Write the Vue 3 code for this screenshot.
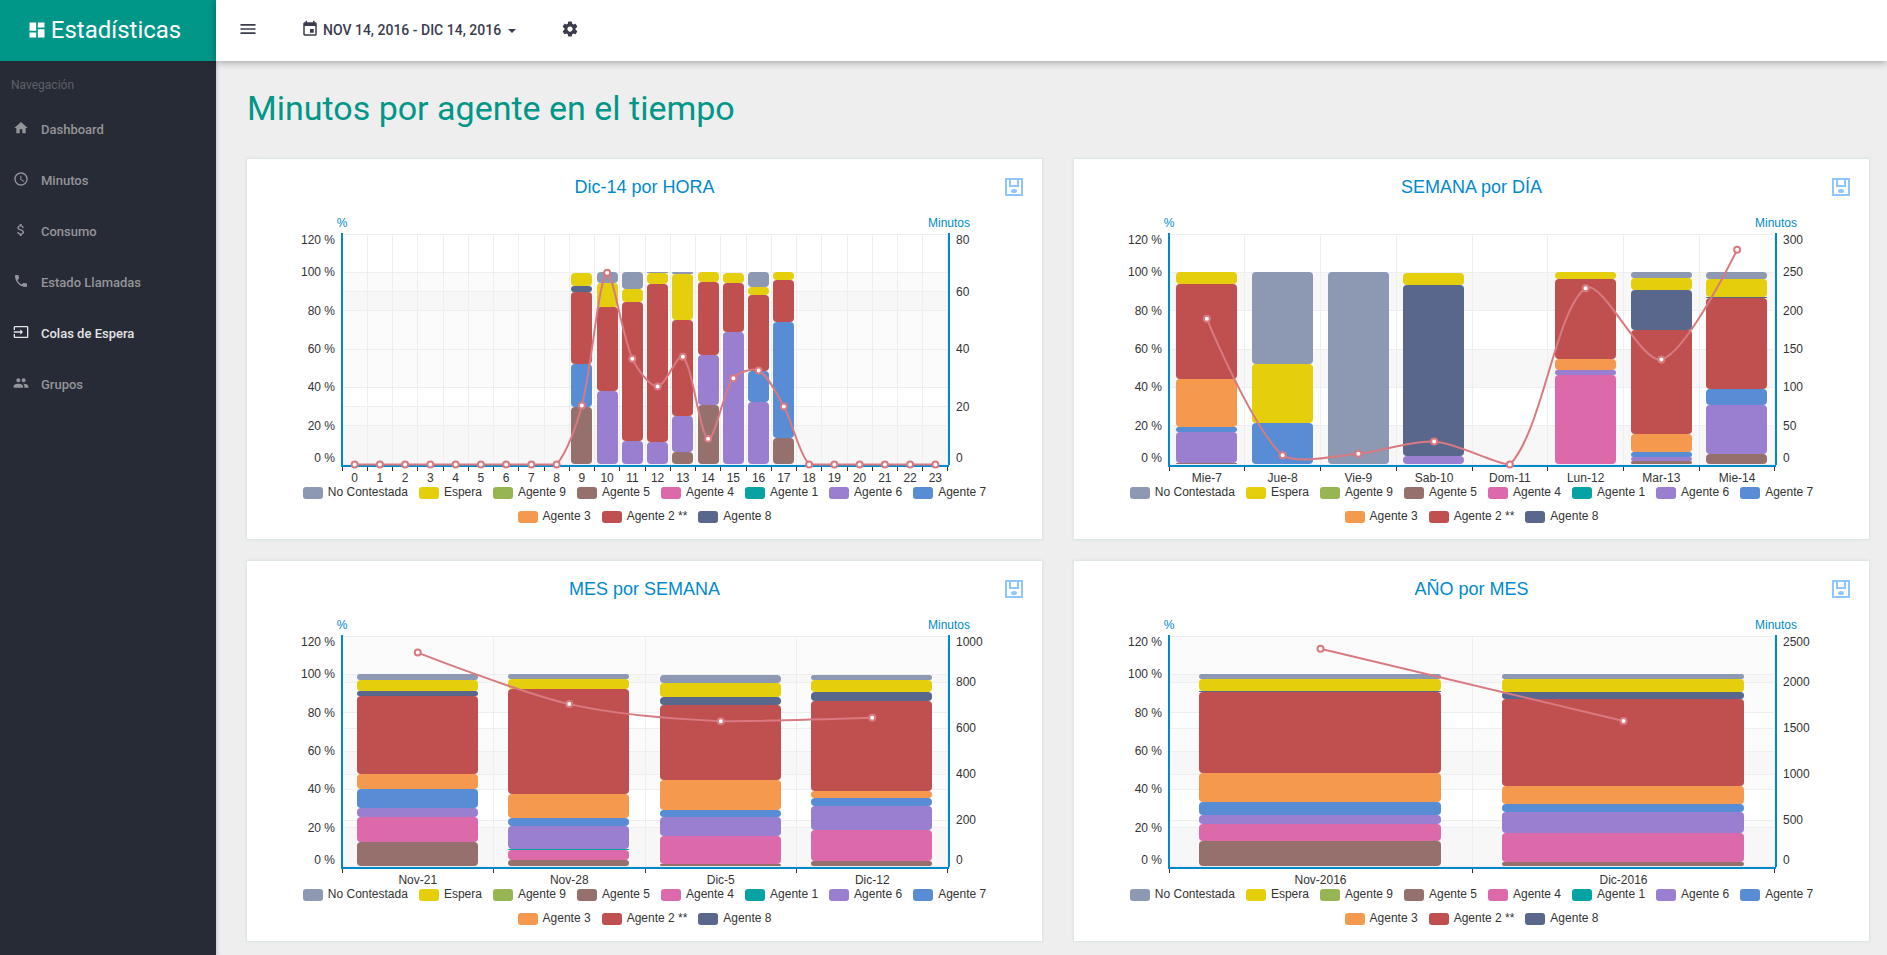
<script setup>
import { ref, computed, onMounted, onBeforeUnmount } from 'vue'

const nav = [
  { label: 'Dashboard', icon: 'M10 20v-6h4v6h5v-8h3L12 3 2 12h3v8z' },
  { label: 'Minutos', icon: 'M11.99 2C6.47 2 2 6.48 2 12s4.47 10 9.99 10C17.52 22 22 17.52 22 12S17.52 2 11.99 2zM12 20c-4.42 0-8-3.58-8-8s3.58-8 8-8 8 3.58 8 8-3.58 8-8 8zm.5-13H11v6l5.25 3.15.75-1.23-4.5-2.67z' },
  { label: 'Consumo', icon: 'M11.8 10.9c-2.27-.59-3-1.2-3-2.15 0-1.09 1.01-1.85 2.7-1.85 1.78 0 2.44.85 2.5 2.1h2.21c-.07-1.72-1.12-3.3-3.21-3.81V3h-3v2.16c-1.94.42-3.5 1.68-3.5 3.61 0 2.31 1.91 3.46 4.7 4.13 2.5.6 3 1.48 3 2.41 0 .69-.49 1.79-2.7 1.79-2.06 0-2.87-.92-2.98-2.1h-2.2c.12 2.19 1.76 3.42 3.68 3.83V21h3v-2.15c1.95-.37 3.5-1.5 3.5-3.55 0-2.84-2.43-3.81-4.7-4.4z' },
  { label: 'Estado Llamadas', icon: 'M6.62 10.79c1.44 2.83 3.76 5.14 6.59 6.59l2.2-2.2c.27-.27.67-.36 1.02-.24 1.12.37 2.33.57 3.57.57.55 0 1 .45 1 1V20c0 .55-.45 1-1 1-9.39 0-17-7.61-17-17 0-.55.45-1 1-1h3.5c.55 0 1 .45 1 1 0 1.25.2 2.45.57 3.57.11.35.03.74-.25 1.02l-2.2 2.2z' },
  { label: 'Colas de Espera', active: true, icon: 'M21 3.01H3c-1.1 0-2 .9-2 2V9h2V4.99h18v14.03H3V15H1v4.01c0 1.1.9 1.98 2 1.98h18c1.1 0 2-.88 2-1.98v-14c0-1.11-.9-2-2-2zM11 16l4-4-4-4v3H1v2h10v3z' },
  { label: 'Grupos', icon: 'M16 11c1.66 0 2.99-1.34 2.99-3S17.66 5 16 5c-1.66 0-3 1.34-3 3s1.34 3 3 3zm-8 0c1.66 0 2.99-1.34 2.99-3S9.66 5 8 5C6.34 5 5 6.34 5 8s1.34 3 3 3zm0 2c-2.33 0-7 1.17-7 3.5V19h14v-2.5c0-2.33-4.67-3.5-7-3.5zm8 0c-.29 0-.62.02-.97.05 1.16.84 1.97 1.97 1.97 3.45V19h6v-2.5c0-2.33-4.67-3.5-7-3.5z' },
]

const series = [
  { key: 'nc', name: 'No Contestada', color: '#8d98b3' },
  { key: 'es', name: 'Espera', color: '#e5cf0d' },
  { key: 'a9', name: 'Agente 9', color: '#97b552' },
  { key: 'a5', name: 'Agente 5', color: '#95706d' },
  { key: 'a4', name: 'Agente 4', color: '#dc69aa' },
  { key: 'a1', name: 'Agente 1', color: '#07a2a4' },
  { key: 'a6', name: 'Agente 6', color: '#9a7fd1' },
  { key: 'a7', name: 'Agente 7', color: '#588dd5' },
  { key: 'a3', name: 'Agente 3', color: '#f5994e' },
  { key: 'a2', name: 'Agente 2 **', color: '#c05050' },
  { key: 'a8', name: 'Agente 8', color: '#59678c' },
]
const stackOrder = ['a9', 'a5', 'a4', 'a1', 'a6', 'a7', 'a3', 'a2', 'a8', 'es', 'nc']
const colorOf = Object.fromEntries(series.map((s) => [s.key, s.color]))

// Every entry: category, minutes, share in percent per series
const hours = {
  9: [20.5, { a5: 29.6, a7: 22.8, a2: 37.2, a8: 3.2, es: 6.7 }],
  10: [66.7, { a6: 37.9, a2: 43.9, es: 12.5, nc: 5.7 }],
  11: [36.8, { a6: 11.8, a2: 72.7, es: 6.7, nc: 8.8 }],
  12: [27.1, { a6: 11.4, a2: 82.5, es: 5.6, nc: 0.5 }],
  13: [37.5, { a5: 6.2, a6: 19.1, a2: 50, es: 23.7, nc: 1 }],
  14: [9, { a5: 30.6, a6: 26.3, a2: 38.2, es: 4.9 }],
  15: [30, { a6: 68.9, a2: 25.6, es: 5 }],
  16: [32.7, { a6: 32.2, a7: 16.1, a2: 39.8, es: 4.1, nc: 7.8 }],
  17: [20.2, { a5: 13.5, a7: 60.5, a2: 21.8, es: 4.2 }],
}

const source = [
  {
    title: 'Dic-14 por HORA', max: 80, step: 20,
    rows: Array.from({ length: 24 }, (_, h) => [String(h), ...(hours[h] || [0, {}])]),
  },
  {
    title: 'SEMANA por DÍA', max: 300, step: 50,
    rows: [
      ['Mie-7', 190, { a5: 0.4, a6: 16.5, a7: 2.2, a3: 25.3, a2: 49.4, es: 6.2 }],
      ['Jue-8', 12, { a7: 21.5, es: 30.9, nc: 47.6 }],
      ['Vie-9', 14, { nc: 100 }],
      ['Sab-10', 30, { a6: 4, a8: 89.4, es: 6.1 }],
      ['Dom-11', 0, {}],
      ['Lun-12', 230, { a4: 46.3, a6: 2.9, a3: 5.5, a2: 41.6, es: 3.7 }],
      ['Mar-13', 137, { a5: 1.5, a6: 2.1, a7: 2.6, a3: 9.7, a2: 54.1, a8: 21, es: 6, nc: 3 }],
      ['Mie-14', 280, { a5: 5, a6: 26, a7: 8.2, a2: 47.5, a8: 0.5, es: 9.3, nc: 3.5 }],
    ],
  },
  {
    title: 'MES por SEMANA', max: 1000, step: 200,
    rows: [
      ['Nov-21', 930, { a5: 12.7, a4: 13, a6: 4.7, a7: 9.9, a3: 7.8, a2: 40.5, a8: 2.6, es: 5.7, nc: 3.1 }],
      ['Nov-28', 706, { a5: 2.9, a4: 5.5, a1: 0.5, a6: 12, a7: 4.2, a3: 12.5, a2: 54.6, es: 5.2, nc: 2.6 }],
      ['Dic-5', 632, { a5: 1.2, a4: 14.2, a6: 10.4, a7: 3.5, a3: 15.6, a2: 39, a8: 4.2, es: 7.3, nc: 4.2 }],
      ['Dic-12', 647, { a5: 2.4, a4: 16.5, a6: 12.5, a7: 4.2, a3: 3.6, a2: 47.1, a8: 4.3, es: 6.2, nc: 2.7 }],
    ],
  },
  {
    title: 'AÑO por MES', max: 2500, step: 500,
    rows: [
      ['Nov-2016', 2366, { a5: 13.3, a4: 8.7, a6: 4.7, a7: 6.8, a3: 15.1, a2: 42.1, a8: 0.8, es: 6, nc: 2.5 }],
      ['Dic-2016', 1581, { a5: 2.1, a4: 15.3, a6: 10.9, a7: 3.8, a3: 9.7, a2: 45.3, a8: 3.6, es: 6.8, nc: 2.5 }],
    ],
  },
]

const plotWidth = ref(765)
const grid = ref(null)
let observer
const measure = () => {
  const el = grid.value && grid.value.querySelector('.plot')
  if (el) plotWidth.value = Math.round(el.getBoundingClientRect().width)
}
onMounted(() => {
  measure()
  observer = new ResizeObserver(measure)
  observer.observe(grid.value)
})
onBeforeUnmount(() => observer && observer.disconnect())

const TOP = 19
const BOTTOM = 249
const LEFT = 80
const SMOOTH = 0.3
const crisp = (v) => Math.floor(v) + 0.5

function smooth(points) {
  const ys = points.map((p) => p[1])
  const lo = Math.min(...ys)
  const hi = Math.max(...ys)
  const clamp = (v) => Math.min(hi, Math.max(lo, v))
  const dist = (a, b) => Math.hypot(a[0] - b[0], a[1] - b[1])
  const handles = points.map((p, i) => {
    const prev = points[i - 1]
    const next = points[i + 1]
    if (!prev || !next) return [p, p]
    const d0 = dist(p, prev)
    const d1 = dist(p, next)
    const v = [(next[0] - prev[0]) * SMOOTH, (next[1] - prev[1]) * SMOOTH]
    const at = (k) => [p[0] + v[0] * k, clamp(p[1] + v[1] * k)]
    return [at(-d0 / (d0 + d1)), at(d1 / (d0 + d1))]
  })
  return points.reduce((d, p, i) => {
    if (i === 0) return `M${p}`
    return `${d}C${handles[i - 1][1]} ${handles[i][0]} ${p}`
  }, '')
}

function axis(max, step, unit) {
  const ticks = []
  for (let v = 0; v <= max; v += step) {
    const y = BOTTOM - (v / max) * (BOTTOM - TOP)
    let base = Math.round(y) + 4
    if (v === 0) base = BOTTOM - 2
    if (v === max) base = TOP + 10
    ticks.push({ v, y, line: crisp(y), base, text: v + unit })
  }
  const bands = ticks.slice(0, -1).filter((_, i) => i % 2 === 0)
    .map((t) => ({ y: t.y - (step / max) * (BOTTOM - TOP), h: (step / max) * (BOTTOM - TOP) }))
  return { ticks, bands }
}

const charts = computed(() => source.map((c) => {
  const right = plotWidth.value - 79
  const pitch = (right - LEFT) / c.rows.length
  const scale = (BOTTOM - TOP) / 120
  const barWidth = pitch < 30 ? Math.ceil(pitch * 0.8) : Math.round(pitch * 0.8)
  const rects = []
  const points = []
  c.rows.forEach(([, minutes, shares], i) => {
    const cx = LEFT + pitch * (i + 0.5)
    points.push([cx, BOTTOM + 0.5 - (minutes / c.max) * (BOTTOM - TOP)])
    const x0 = Math.floor(cx - pitch * 0.4)
    let sum = 0
    stackOrder.forEach((key) => {
      if (!shares[key]) return
      const y1 = Math.round(BOTTOM - sum * scale)
      sum += shares[key]
      const y0 = Math.round(BOTTOM - sum * scale)
      const h = Math.max(1, y1 - y0)
      rects.push({ x: x0, y: y0, w: barWidth, h, r: Math.min(4, h / 2), fill: colorOf[key] })
    })
  })
  return {
    title: c.title,
    right,
    rects,
    points,
    path: smooth(points),
    left: axis(120, 20, ' %'),
    minutes: axis(c.max, c.step, ''),
    labels: c.rows.map((r, i) => ({ text: r[0], x: LEFT + pitch * (i + 0.5) })),
    ticks: Array.from({ length: c.rows.length + 1 }, (_, i) => Math.min(crisp(LEFT + pitch * i), right - 0.5)),
  }
}))
</script>

<template>
  <div class="layout">
    <aside class="sidebar">
      <a class="brand" href="#">
        <svg viewBox="0 0 24 24" aria-hidden="true"><path d="M3 13h8V3H3v10zm0 8h8v-6H3v6zm10 0h8V11h-8v10zm0-18v6h8V3h-8z" /></svg>
        <span>Estadísticas</span>
      </a>
      <nav>
        <p class="nav-title">Navegación</p>
        <a v-for="item in nav" :key="item.label" href="#" class="nav-link" :class="{ active: item.active }">
          <svg viewBox="0 0 24 24" aria-hidden="true"><path :d="item.icon" /></svg>
          <span>{{ item.label }}</span>
        </a>
      </nav>
    </aside>

    <div class="content">
      <header class="topbar">
        <button type="button" class="menu" aria-label="Menú">
          <svg viewBox="0 0 24 24"><path d="M3 18h18v-2H3v2zm0-5h18v-2H3v2zm0-7v2h18V6H3z" /></svg>
        </button>
        <button type="button" class="range">
          <svg viewBox="0 0 24 24" aria-hidden="true"><path d="M17 12h-5v5h5v-5zM16 1v2H8V1H6v2H5c-1.11 0-1.99.9-1.99 2L3 19c0 1.1.89 2 2 2h14c1.1 0 2-.9 2-2V5c0-1.1-.9-2-2-2h-1V1h-2zm3 18H5V8h14v11z" /></svg>
          <span>NOV 14, 2016 - DIC 14, 2016</span>
          <i class="caret"></i>
        </button>
        <button type="button" class="settings" aria-label="Ajustes">
          <svg viewBox="0 0 24 24"><path d="M19.43 12.98c.04-.32.07-.64.07-.98s-.03-.66-.07-.98l2.11-1.65c.19-.15.24-.42.12-.64l-2-3.46c-.12-.22-.39-.3-.61-.22l-2.49 1c-.52-.4-1.08-.73-1.69-.98l-.38-2.65C14.46 2.18 14.25 2 14 2h-4c-.25 0-.46.18-.49.42l-.38 2.65c-.61.25-1.17.59-1.69.98l-2.49-1c-.23-.09-.49 0-.61.22l-2 3.46c-.13.22-.07.49.12.64l2.11 1.65c-.04.32-.07.65-.07.98s.03.66.07.98l-2.11 1.65c-.19.15-.24.42-.12.64l2 3.46c.12.22.39.3.61.22l2.49-1c.52.4 1.08.73 1.69.98l.38 2.65c.03.24.24.42.49.42h4c.25 0 .46-.18.49-.42l.38-2.65c.61-.25 1.17-.59 1.69-.98l2.49 1c.23.09.49 0 .61-.22l2-3.46c.12-.22.07-.49-.12-.64l-2.11-1.65zM12 15.5c-1.93 0-3.5-1.57-3.5-3.5s1.57-3.5 3.5-3.5 3.5 1.57 3.5 3.5-1.57 3.5-3.5 3.5z" /></svg>
        </button>
      </header>

      <main>
        <h1>Minutos por agente en el tiempo</h1>
        <div ref="grid" class="cards">
          <section v-for="c in charts" :key="c.title" class="card">
            <div class="card-head">
              <h2>{{ c.title }}</h2>
              <button type="button" class="save" :aria-label="'Guardar ' + c.title">
                <svg viewBox="0 0 18 18">
                  <path d="M1 1h16v16H1zM5 2v6h8V2" />
                  <ellipse cx="9" cy="13" rx="2" ry="1" />
                </svg>
              </button>
            </div>
            <div class="plot">
              <svg :width="plotWidth" height="272">
                <g class="bands">
                  <rect v-for="b in c.left.bands" :key="'l' + b.y" :x="80" :y="b.y" :width="c.right - 80" :height="b.h" />
                  <rect v-for="b in c.minutes.bands" :key="'r' + b.y" :x="80" :y="b.y" :width="c.right - 80" :height="b.h" />
                </g>
                <g class="gridlines">
                  <line v-for="t in c.left.ticks" :key="'l' + t.v" :x1="80" :x2="c.right" :y1="t.line" :y2="t.line" />
                  <line v-for="t in c.minutes.ticks" :key="'r' + t.v" :x1="80" :x2="c.right" :y1="t.line" :y2="t.line" />
                  <line v-for="x in c.ticks" :key="'v' + x" :x1="x" :x2="x" y1="19" y2="250" />
                </g>
                <g class="axes">
                  <line x1="80" x2="80" y1="18" y2="252" />
                  <line :x1="c.right + 1" :x2="c.right + 1" y1="18" y2="250" />
                  <line x1="79" :x2="c.right + 1" y1="251" y2="251" />
                </g>
                <g class="ticks">
                  <line v-for="x in c.ticks" :key="x" :x1="x" :x2="x" y1="252" y2="256" />
                </g>
                <rect v-for="(r, i) in c.rects" :key="i" :x="r.x" :y="r.y" :width="r.w" :height="r.h" :rx="r.r" :fill="r.fill" />
                <path class="trend" :d="c.path" />
                <circle v-for="(p, i) in c.points" :key="i" class="dot" :cx="p[0]" :cy="p[1]" r="3" />
                <g class="names">
                  <text x="80" y="12">%</text>
                  <text :x="c.right + 1" y="12">Minutos</text>
                </g>
                <text v-for="t in c.left.ticks" :key="'tl' + t.v" class="end" x="73" :y="t.base">{{ t.text }}</text>
                <text v-for="t in c.minutes.ticks" :key="'tr' + t.v" :x="c.right + 8" :y="t.base">{{ t.text }}</text>
                <text v-for="l in c.labels" :key="l.text" class="mid" :x="l.x" y="267">{{ l.text }}</text>
              </svg>
            </div>
            <ul class="legend">
              <li v-for="s in series" :key="s.key">
                <i :style="{ background: s.color }"></i>
                <span>{{ s.name }}</span>
              </li>
            </ul>
          </section>
        </div>
      </main>
    </div>
  </div>
</template>

<style>
body {
  margin: 0;
  background: #eeeeee;
}
</style>

<style scoped>
.layout {
  display: flex;
  min-height: 100vh;
  font-family: Roboto, "Liberation Sans", sans-serif;
  background: #eeeeee;
}
.sidebar {
  flex: 0 0 216px;
  background: #272b35;
  box-shadow: 0 0 4px rgba(0, 0, 0, 0.3);
}
.brand {
  display: flex;
  align-items: center;
  justify-content: center;
  gap: 4px;
  height: 60px;
  padding: 0 8px 1px 0;
  background: #009688;
  color: #ffffff;
  font-size: 24px;
  text-decoration: none;
}
.brand svg {
  width: 20px;
  height: 20px;
  fill: currentColor;
}
.nav-title {
  margin: 0;
  padding: 14px 11px 0;
  font-size: 12px;
  line-height: 20px;
  color: #5e6166;
}
.nav-link {
  display: flex;
  align-items: center;
  gap: 12px;
  height: 51px;
  padding-left: 13px;
  color: #949598;
  font-size: 13px;
  font-weight: 500;
  text-decoration: none;
}
.nav-title + .nav-link {
  margin-top: 9px;
}
.nav-link.active {
  color: #e4e4e6;
}
.nav-link svg {
  width: 16px;
  height: 16px;
  margin-bottom: 4px;
  fill: currentColor;
}
.content {
  flex: 1;
  min-width: 0;
}
.topbar {
  display: flex;
  align-items: center;
  height: 61px;
  box-sizing: border-box;
  padding: 0 22px 4px;
  background: #ffffff;
  box-shadow: 0 1px 8px rgba(0, 0, 0, 0.35);
}
.topbar button {
  display: flex;
  align-items: center;
  padding: 0;
  border: 0;
  background: none;
  color: #3a3c4e;
  font: 500 14px Roboto, "Liberation Sans", sans-serif;
  cursor: pointer;
}
.topbar svg {
  width: 18px;
  height: 18px;
  fill: currentColor;
}
.topbar .menu svg {
  width: 20px;
  height: 20px;
}
.topbar .range {
  margin: 0 45px 0 43px;
}
.range span {
  margin: 3px 7px 0 4px;
}
.caret {
  margin-top: 5px;
  border-top: 4px solid currentColor;
  border-left: 4px solid transparent;
  border-right: 4px solid transparent;
}
main {
  padding: 0 18px 14px 31px;
}
h1 {
  margin: 0;
  padding: 27px 0 31px;
  font-size: 34px;
  line-height: 40px;
  font-weight: 400;
  color: #009688;
}
.cards {
  display: grid;
  grid-template-columns: 1fr 1fr;
  gap: 22px 32px;
}
.card {
  min-width: 0;
  background: #ffffff;
  box-shadow: 0 0 2px 1px rgba(208, 224, 220, 0.7);
  font-family: "Liberation Sans", Arial, sans-serif;
}
.card-head {
  display: grid;
  grid-template-columns: 1fr auto 1fr;
  align-items: center;
  height: 18px;
  padding: 19px;
}
.card-head h2 {
  grid-column: 2;
  margin: 0;
  font-size: 18px;
  line-height: 18px;
  font-weight: 400;
  color: #008acd;
}
.save {
  justify-self: end;
  padding: 0;
  border: 0;
  background: none;
  cursor: pointer;
}
.save svg {
  display: block;
  width: 18px;
  height: 18px;
  fill: none;
  stroke: #1e90ff;
  stroke-opacity: 0.5;
  stroke-width: 2;
}
.plot {
  margin: 0 15px;
  overflow: hidden;
}
.plot svg {
  display: block;
}
.plot text {
  font-size: 12px;
  fill: #333333;
}
.plot .end {
  text-anchor: end;
}
.plot .mid {
  text-anchor: middle;
}
.plot .names text {
  text-anchor: middle;
  fill: #008acd;
}
.bands rect {
  fill: rgba(200, 200, 200, 0.08);
}
.gridlines line {
  stroke: #eeeeee;
}
.axes line {
  stroke: #008acd;
  stroke-width: 2;
}
.ticks line {
  stroke: #333333;
}
.trend {
  fill: none;
  stroke: #d87a80;
  stroke-width: 2;
}
.dot {
  fill: #ffffff;
  stroke: #d87a80;
  stroke-width: 2;
}
.legend {
  display: flex;
  flex-wrap: wrap;
  justify-content: center;
  gap: 12px 11px;
  margin: 0;
  padding: 0 40px 16px;
  list-style: none;
  font-size: 12px;
  line-height: 10px;
  color: #333333;
}
.legend li {
  display: flex;
  gap: 5px;
  height: 12px;
}
.legend i {
  width: 20px;
  height: 12px;
  border-radius: 3px;
}
</style>
